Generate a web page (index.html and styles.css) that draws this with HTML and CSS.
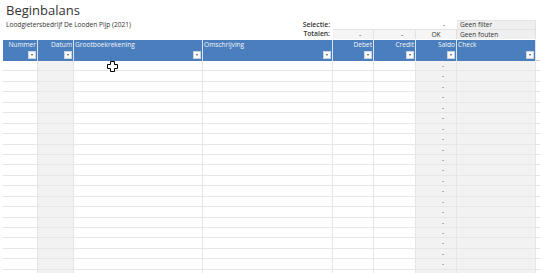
FILE: index.html
```html
<!DOCTYPE html>
<html>
<head>
<meta charset="utf-8">
<link rel="stylesheet" href="styles.css">
</head>
<body>
<div class="sheet">
  <div class="title">Beginbalans</div>
  <div class="subtitle">Loodgietersbedrijf De Looden Pijp (2021)</div>
  <div class="lbl sel-lbl">Selectie:</div>
  <div class="c r2 k6 nb"></div>
  <div class="c r2 k7 nb"></div>
  <div class="c r2 k8 nb acc">-</div>
  <div class="c r2 k9 gray txt">Geen filter</div>
  <div class="lbl tot-lbl">Totalen:</div>
  <div class="c box k6 acc">-</div>
  <div class="c box k7 acc">-</div>
  <div class="c box k8 ctr">OK</div>
  <div class="c box k9 gray txt">Geen fouten</div>

  <div class="h k2 r">Nummer<span class="dd"></span></div>
  <div class="h k3 r">Datum<span class="dd"></span></div>
  <div class="h k4">Grootboekrekening<span class="dd"></span></div>
  <div class="h k5">Omschrijving<span class="dd"></span></div>
  <div class="h k6 r">Debet<span class="dd"></span></div>
  <div class="h k7 r">Credit<span class="dd"></span></div>
  <div class="h k8 r">Saldo<span class="dd"></span></div>
  <div class="h k9">Check<span class="dd"></span></div>
  <div class="hx"></div>
</div>
<div class="rows" id="rows"></div>
<svg class="cursor" width="11" height="11" viewBox="0 0 11 11"><path d="M3.5 0.5h4v3h3v4h-3v3h-4v-3h-3v-4h3z" fill="#fff" stroke="#000" stroke-width="1"/></svg>
<script>
  var rows = document.getElementById('rows');
  var html = '';
  for (var i = 0; i < 21; i++) {
    var dash = i < 20 ? '-' : '';
    html += '<div class="d k2"></div><div class="d k3 g"></div><div class="d k4"></div><div class="d k5"></div><div class="d k6"></div><div class="d k7"></div><div class="d k8 g acc">' + dash + '</div><div class="d k9 g"></div><div class="d k10 x"></div>';
  }
  rows.innerHTML = html;
</script>
</body>
</html>
```
FILE: styles.css
```css
html, body {
  margin: 0;
  padding: 0;
  background: #fff;
  overflow: hidden;
}
body {
  width: 540px;
  height: 273px;
  position: relative;
  font-family: "Open Sans", "Noto Sans", sans-serif;
  color: #222;
}
.sheet, .rows {
  display: grid;
  grid-template-columns: 3px 35px 36px 129px 130px 41px 42px 41px 79px 4px;
}
.sheet {
  grid-template-rows: 20px 9px 10px 22px;
}
.k2 { grid-column: 2; }
.k3 { grid-column: 3; }
.k4 { grid-column: 4; }
.k5 { grid-column: 5; }
.k6 { grid-column: 6; }
.k7 { grid-column: 7; }
.k8 { grid-column: 8; }
.k9 { grid-column: 9; }
.k10 { grid-column: 10; }
.title {
  grid-column: 2 / 6;
  grid-row: 1;
  font-size: 13px;
  line-height: 14px;
  padding: 3px 0 0 3px;
  color: #333;
}
.subtitle {
  grid-column: 2 / 5;
  grid-row: 2;
  font-size: 6.6px;
  line-height: 9px;
  padding-left: 3px;
  color: #333;
  white-space: nowrap;
}
.lbl {
  grid-column: 5;
  text-align: right;
  font-size: 6.8px;
  line-height: 9px;
  padding-right: 3px;
  font-weight: 600;
  color: #333;
}
.sel-lbl { grid-row: 2; }
.tot-lbl { grid-row: 3; line-height: 10px; }
.r2 { grid-row: 2; }
.c {
  font-size: 6.6px;
  line-height: 9px;
  color: #333;
  white-space: nowrap;
  border-right: 1px solid #e2e2e2;
}
.c.nb { border-right: none; }
.box {
  grid-row: 3;
  line-height: 10px;
  border-top: 1px solid #e2e2e2;
  background: #f5f5f5;
}
.c.gray { background: #efefef; border-top: 1px solid #e2e2e2; }
.r2.gray { line-height: 8px; }
.txt { padding-left: 3px; }
.acc { text-align: right; padding-right: 12px; }
.ctr { text-align: center; }
.h {
  grid-row: 4;
  margin-top: 1px;
  background: #4a7ebd;
  color: #f4f7fb;
  font-size: 6.6px;
  line-height: 10px;
  padding: 0 1px 0 1px;
  position: relative;
  border-right: 1px solid #d8e3f1;
  white-space: nowrap;
}
.h.r { text-align: right; }
.dd {
  position: absolute;
  right: 1px;
  bottom: 2px;
  width: 6px;
  height: 6px;
  background: #fafafa;
  border: 1px solid #c9d3df;
}
.dd::after {
  content: "";
  position: absolute;
  left: 1.5px;
  top: 2px;
  border-left: 1.5px solid transparent;
  border-right: 1.5px solid transparent;
  border-top: 2px solid #555;
}
.hx {
  grid-row: 4;
  grid-column: 10;
  border-bottom: 1px solid #d0d0d0;
}
.rows {
  grid-auto-rows: 10.45px;
}
.d {
  border-bottom: 1px solid #e6e6e6;
  border-right: 1px solid #e6e6e6;
  font-size: 6.6px;
  line-height: 10px;
  color: #555;
  box-sizing: border-box;
}
.d.g { background: #f2f2f2; }
.d.x { border-right: none; }
.cursor {
  position: absolute;
  left: 107px;
  top: 61px;
}
```
